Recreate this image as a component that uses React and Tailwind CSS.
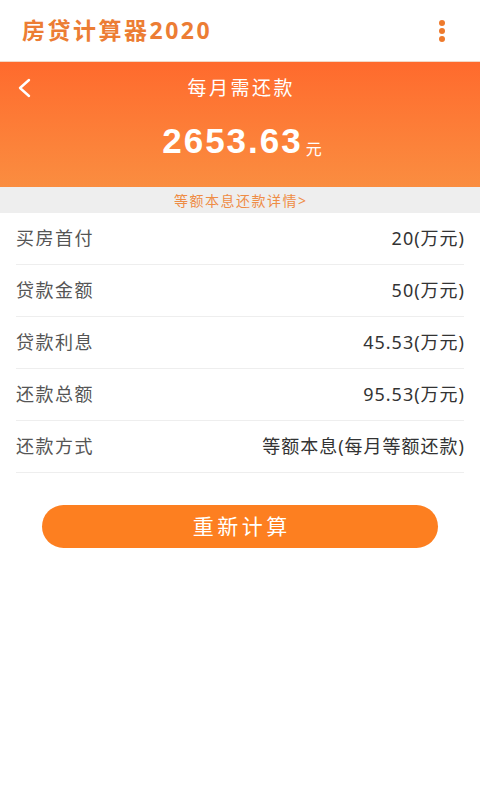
import React from 'react';

const rows = [
  { label: '买房首付', value: '20(万元)' },
  { label: '贷款金额', value: '50(万元)' },
  { label: '贷款利息', value: '45.53(万元)' },
  { label: '还款总额', value: '95.53(万元)' },
  { label: '还款方式', value: '等额本息(每月等额还款)' },
];

export default function App() {
  return (
    <div
      className="min-h-screen w-[480px] bg-white"
      style={{ fontFamily: '"Noto Sans", "Noto Sans CJK SC", sans-serif' }}
    >
      {/* top bar */}
      <div className="h-[62px] flex items-center justify-between pl-[22px] pr-[35px] border-b border-[#f2d9c8]">
        <h1 className="text-[23px] font-bold text-[#ec7d34] tracking-[2.5px]">房贷计算器2020</h1>
        <div className="flex flex-col gap-[2px] items-center">
          <span className="w-[6px] h-[6px] rounded-full bg-[#ee7a2c]" />
          <span className="w-[6px] h-[6px] rounded-full bg-[#ee7a2c]" />
          <span className="w-[6px] h-[6px] rounded-full bg-[#ee7a2c]" />
        </div>
      </div>

      {/* result panel */}
      <div className="h-[125px] bg-gradient-to-b from-[#ff6a2d] to-[#fa8d40] text-white flex flex-col">
        <div className="relative h-[52px] flex items-center justify-center">
          <svg
            className="absolute left-[16px] top-[15px]"
            width="20"
            height="22"
            viewBox="0 0 20 22"
            fill="none"
            stroke="white"
            strokeWidth="2.4"
            strokeLinecap="round"
            strokeLinejoin="round"
          >
            <path d="M13 3 L4 11 L13 19" />
          </svg>
          <span className="text-[19px] mt-[1px] tracking-[2.5px] pl-[2.5px]">每月需还款</span>
        </div>
        <div className="flex items-end justify-center mt-[9px] pl-[4px]">
          <span
            className="text-[35px] font-bold leading-none tracking-[2px]"
            style={{ fontFamily: '"Liberation Sans", Arial, sans-serif' }}
          >
            2653.63
          </span>
          <span className="text-[16px] ml-[3px] mb-[1px] leading-none">元</span>
        </div>
      </div>

      {/* detail link */}
      <div className="h-[26px] bg-[#eeeeee] flex items-center justify-center">
        <span className="text-[14px] text-[#ee8c45] tracking-[1.5px] pl-[1.5px]">等额本息还款详情&gt;</span>
      </div>

      {/* rows */}
      <div className="px-[16px]">
        {rows.map((row) => (
          <div
            key={row.label}
            className="h-[52px] flex items-center justify-between border-b border-[#eeeeee] text-[18px] text-[#333333]"
          >
            <span className="text-[#555555] tracking-[1.5px]">{row.label}</span>
            <span className="tracking-[1px] mr-[-1px]">{row.value}</span>
          </div>
        ))}
      </div>

      {/* button */}
      <div className="px-[42px] mt-[32px]">
        <button className="w-full h-[43px] rounded-full bg-[#fd7f20] text-white text-[21px] tracking-[3.5px] pl-[3.5px]">
          重新计算
        </button>
      </div>
    </div>
  );
}
